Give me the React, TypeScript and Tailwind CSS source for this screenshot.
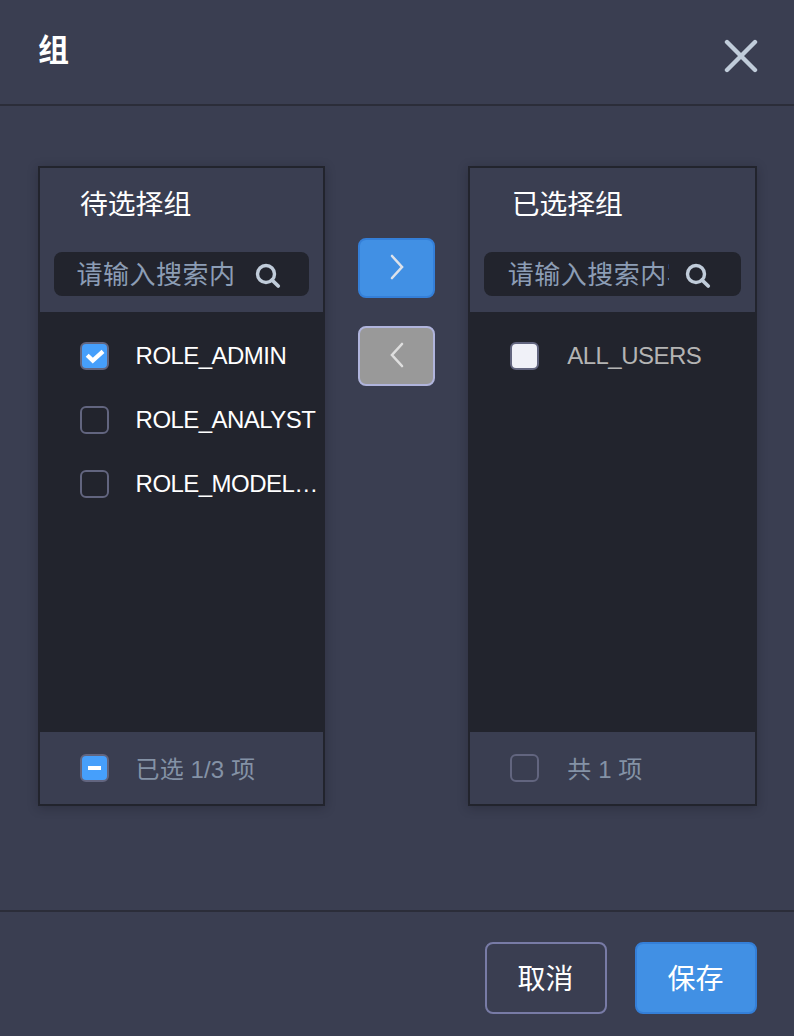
import React from "react";

type CheckState = "checked" | "unchecked" | "mixed" | "disabled";

function Box({ state }: { state: CheckState }) {
  const fill =
    state === "checked" || state === "mixed"
      ? "bg-[#469ffb]"
      : state === "disabled"
        ? "bg-[#f0f1f8]"
        : "bg-transparent";
  return (
    <span
      className={`flex h-7 w-[28.6px] shrink-0 items-center justify-center rounded-[6px] border-2 border-[#62657f] ${fill}`}
    >
      {state === "checked" && (
        <svg width="24" height="24" viewBox="0 0 24 24" fill="none" className="shrink-0">
          <path d="M5.2 11.2l5.6 5.4L21 7.4" stroke="#fff" strokeWidth="4.2" />
        </svg>
      )}
      {state === "mixed" && <span className="h-1 w-[13px] bg-white" />}
    </span>
  );
}

interface Item {
  label: string;
  state: CheckState;
}

interface PanelProps {
  title: string;
  items: Item[];
  footer: string;
  footerState: CheckState;
  className: string;
  titleClass: string;
  inputClass: string;
  labelGap: string;
}

function Panel({
  title,
  items,
  footer,
  footerState,
  className,
  titleClass,
  inputClass,
  labelGap,
}: PanelProps) {
  return (
    <section
      className={`flex h-[640px] shrink-0 flex-col border-2 border-[#22242d] bg-[#22242d] shadow-[0_2px_10px_rgba(20,20,30,0.3)] ${className}`}
    >
      <div className="h-36 bg-[#3a3e51] px-3.5">
        <h2
          className={`flex h-[84px] items-start pt-[17px] text-[27.8px] leading-10 font-normal text-white ${titleClass}`}
        >
          {title}
        </h2>
        <div className="flex h-11 items-center rounded-lg bg-[#22242d]">
          <div
            className={`overflow-hidden pt-[3px] text-[26px] leading-[41px] tracking-[0.5px] whitespace-nowrap text-[#8c9db5] ${inputClass}`}
          >
            请输入搜索内容
          </div>
          <svg width="26" height="26" viewBox="0 0 26 26" fill="none" stroke="#c0ccda" className="mt-1 shrink-0">
            <circle cx="11" cy="11" r="8.5" strokeWidth="3.4" />
            <path d="M17 17l6.2 6" strokeWidth="3.8" strokeLinecap="round" />
          </svg>
        </div>
      </div>
      <ul className="flex flex-1 flex-col pt-3">
        {items.map((item) => (
          <li key={item.label} className="flex h-16 items-center pl-10">
            <Box state={item.state} />
            <span
              className={`w-[186px] truncate text-2xl tracking-[-0.54px] ${labelGap} ${
                item.state === "disabled" ? "text-[#b4b4b4]" : "text-white"
              }`}
            >
              {item.label}
            </span>
          </li>
        ))}
      </ul>
      <div className="flex h-[72px] items-center bg-[#3a3e51] pl-10">
        <Box state={footerState} />
        <span className={`mt-1 text-2xl tracking-[0.1px] text-[#8492a6] ${labelGap}`}>{footer}</span>
      </div>
    </section>
  );
}

export default function App() {
  return (
    <div className="flex h-[1036px] w-[794px] flex-col overflow-hidden bg-[#3a3e51] font-['Liberation_Sans','Noto_Sans_CJK_SC',sans-serif]">
      <header className="flex h-[106px] items-center justify-between border-b-2 border-[#2b2d39] pr-[36.5px] pl-[38px]">
        <h1 className="-mt-0.5 text-[31px] leading-10 font-bold text-white">组</h1>
        <button aria-label="关闭" className="mt-2">
          <svg width="34" height="34" viewBox="0 0 34 34" fill="none" className="block">
            <path d="M3 3l28 28M31 3L3 31" stroke="#c0ccda" strokeWidth="4.4" strokeLinecap="round" />
          </svg>
        </button>
      </header>

      <main className="flex h-[804px] items-start pt-[60px] pl-[38px]">
        <Panel
          title="待选择组"
          className="w-[286.6px]"
          titleClass="pl-[26px]"
          inputClass="mr-[18.5px] ml-[22.5px] w-[159.5px]"
          labelGap="ml-[27px]"
          items={[
            { label: "ROLE_ADMIN", state: "checked" },
            { label: "ROLE_ANALYST", state: "unchecked" },
            { label: "ROLE_MODELER", state: "unchecked" },
          ]}
          footer="已选 1/3 项"
          footerState="mixed"
        />
        <div className="mt-[72px] flex w-[143.6px] flex-col items-center gap-7">
          <button
            aria-label="添加"
            className="flex h-[60px] w-[76.6px] items-center justify-center rounded-lg border-2 border-[#347fd8] bg-[#4190e4]"
          >
            <svg width="14" height="26" viewBox="0 0 14 26" fill="none" className="mb-0.5 ml-0.5">
              <path d="M2 2l10 11L2 24" stroke="#dde2ea" strokeWidth="2.6" strokeLinecap="round" />
            </svg>
          </button>
          <button
            aria-label="移除"
            className="flex h-[60px] w-[76.6px] items-center justify-center rounded-lg border-2 border-[#b0b4dc] bg-[#999999]"
          >
            <svg width="14" height="26" viewBox="0 0 14 26" fill="none" className="mb-0.5 ml-0.5">
              <path d="M12 2L2 13l10 11" stroke="#dedede" strokeWidth="2.6" strokeLinecap="round" />
            </svg>
          </button>
        </div>
        <Panel
          title="已选择组"
          className="w-[288.6px]"
          titleClass="pl-[27.5px]"
          inputClass="mr-4 ml-[23.5px] w-[161.5px]"
          labelGap="ml-[28.5px]"
          items={[{ label: "ALL_USERS", state: "disabled" }]}
          footer="共 1 项"
          footerState="unchecked"
        />
      </main>

      <footer className="flex flex-1 items-start justify-end gap-7 border-t-2 border-[#2b2d39] pt-[30px] pr-[37.5px] text-[28px] text-white">
        <button className="h-[72px] w-[122px] rounded-lg border-2 border-[#787ba6] pt-1">取消</button>
        <button className="h-[72px] w-[122px] rounded-lg border-2 border-[#347fd8] bg-[#4190e4] pt-1">
          保存
        </button>
      </footer>
    </div>
  );
}
